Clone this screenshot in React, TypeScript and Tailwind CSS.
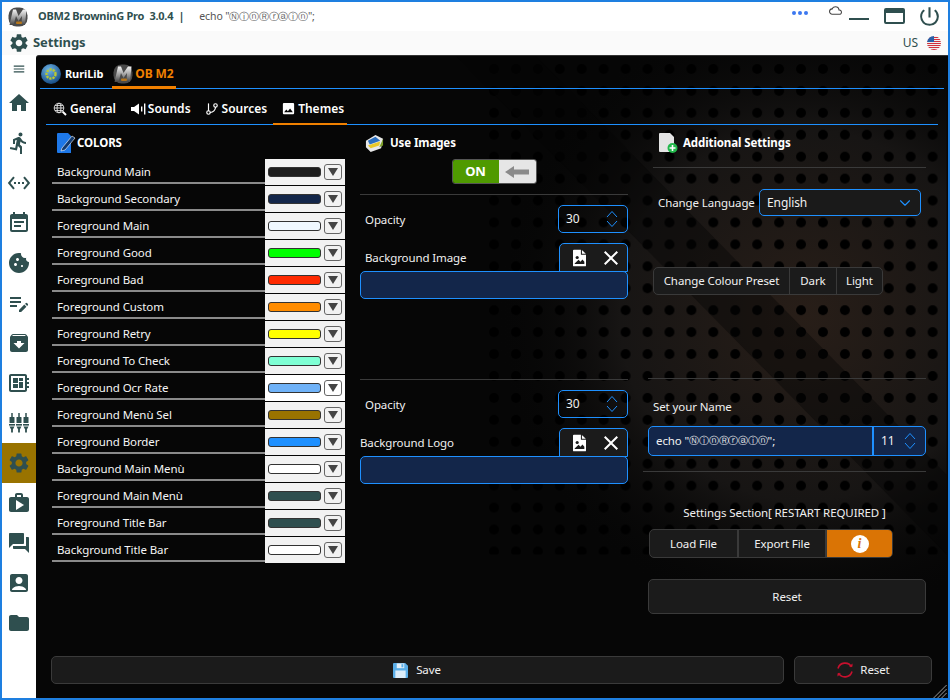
import React from 'react';
import {
  MdAccountBox, MdArchive, MdClose, MdCookie, MdDeveloperBoard, MdDirectionsRun, MdEventNote, MdEditNote,
  MdFolder, MdForum, MdHome, MdImage, MdMenu, MdPowerSettingsNew, MdSettings, MdSettingsEthernet, MdWork,
  MdCloudQueue,
} from 'react-icons/md';
import { LuGitBranch, LuChevronDown } from 'react-icons/lu';

const colors: { label: string; color: string; light?: boolean }[] = [
  { label: 'Background Main', color: '#1e1e1e' },
  { label: 'Background Secondary', color: '#13264a' },
  { label: 'Foreground Main', color: '#f0f8ff' },
  { label: 'Foreground Good', color: '#00ff00' },
  { label: 'Foreground Bad', color: '#ff2a00' },
  { label: 'Foreground Custom', color: '#ff8c00' },
  { label: 'Foreground Retry', color: '#ffff00' },
  { label: 'Foreground To Check', color: '#7fffd4' },
  { label: 'Foreground Ocr Rate', color: '#6fb2f8', light: true },
  { label: 'Foreground Menù Sel', color: '#997300' },
  { label: 'Foreground Border', color: '#1e90ff' },
  { label: 'Background Main Menù', color: '#ffffff' },
  { label: 'Foreground Main Menù', color: '#2f4f4f' },
  { label: 'Foreground Title Bar', color: '#2f4f4f' },
  { label: 'Background Title Bar', color: '#ffffff' },
];

const Logo = ({ id }: { id: string }) => (
  <svg viewBox="0 0 20 20" className="w-5 h-5 shrink-0">
    <defs>
      <linearGradient id={id} x1="0" y1="0" x2="0" y2="1">
        <stop offset="0" stopColor="#f4f4f4" />
        <stop offset="0.55" stopColor="#9a9a9a" />
        <stop offset="1" stopColor="#444" />
      </linearGradient>
    </defs>
    <rect x="0.5" y="0.5" width="19" height="19" rx="8" fill="#4a4a4a" />
    <path d="M1.5 18 L5 2.5 H8 L10.5 9 L15 2.5 H18.5 L17 18 H13.5 L14 9 L10.5 14 L8 9 L5.5 18 Z" fill={`url(#${id})`} />
    <rect x="8" y="14.5" width="6" height="2.5" rx="1" fill="#b5761c" />
  </svg>
);

const RuriIcon = () => (
  <svg viewBox="0 0 20 20" className="w-5 h-5 shrink-0">
    <defs>
      <radialGradient id="ruri" cx="0.4" cy="0.3" r="0.8">
        <stop offset="0" stopColor="#6fb6e8" />
        <stop offset="1" stopColor="#0c3f78" />
      </radialGradient>
    </defs>
    <circle cx="10" cy="10" r="10" fill="url(#ruri)" />
    <circle cx="10" cy="10" r="4.5" fill="none" stroke="#b9c832" strokeWidth="2.4" strokeDasharray="2.2 1" />
  </svg>
);

const Faders = () => (
  <svg viewBox="0 0 20 20" className="w-5 h-5" fill="#2f4f4f">
    {[3, 10, 17].map((x) => (
      <g key={x}>
        <rect x={x - 0.75} y="0" width="1.5" height="4" />
        <rect x={x - 2.5} y="4" width="5" height="6" rx="0.6" />
        <rect x={x - 3} y="11" width="6" height="1.6" />
        <path d={`M${x - 2.5} 13.5 h5 l-1.6 3 v3 h-1.8 v-3 z`} />
      </g>
    ))}
  </svg>
);

const WorkPlay = () => (
  <span className="relative flex items-center justify-center w-6 h-6">
    <MdWork size={24} color="#2f4f4f" />
    <svg viewBox="0 0 10 10" className="absolute w-[10px] h-[10px] top-[9px] left-[8px]">
      <path d="M1 0 L9 5 L1 10 Z" fill="#fff" />
    </svg>
  </span>
);

const GlobeSearch = () => (
  <svg viewBox="0 0 14 14" className="w-[14px] h-[14px] ml-[7px]" fill="none" stroke="#e8e8e8" strokeWidth="0.9">
    <circle cx="6" cy="6" r="4.8" />
    <ellipse cx="6" cy="6" rx="2" ry="4.8" />
    <path d="M1.2 6 H10.8 M2 3.4 H10 M2 8.6 H10" />
    <path d="M9.6 9.6 L13 13" strokeWidth="2" stroke="#fff" />
  </svg>
);

const Speaker = () => (
  <svg viewBox="0 0 16 12" className="w-[16px] h-3 ml-[15px]" fill="#fff">
    <path d="M0 4 H3 L8 0.5 V11.5 L3 8 H0 Z" />
    <rect x="10" y="3.5" width="1.4" height="5" />
    <rect x="13" y="0.5" width="1.4" height="11" />
  </svg>
);

const FileImage = () => (
  <svg viewBox="0 0 14 18" className="w-[13px] h-[18px]">
    <path d="M0 1 Q0 0 1 0 H8.5 V5.5 H14 V17 Q14 18 13 18 H1 Q0 18 0 17 Z" fill="#fff" />
    <path d="M9.6 0.3 L13.8 4.5 H9.6 Z" fill="#fff" />
    <circle cx="4.5" cy="8.5" r="1.7" fill="#1b1b1b" />
    <path d="M1.8 15 L6 11 L8 13 L10.2 10.5 L12.2 13 V15.5 H1.8 Z" fill="#1b1b1b" />
  </svg>
);

const Spin = ({ className = '' }: { className?: string }) => (
  <svg viewBox="0 0 12 20" className={`w-3 h-5 ${className}`} fill="none" stroke="#1e90ff" strokeWidth="1">
    <path d="M1 8 L6 2.5 L11 8" />
    <path d="M1 12 L6 17.5 L11 12" />
  </svg>
);

const Spinner = () => (
  <div className="w-[70px] h-[28px] rounded-[5px] border border-[#1e90ff] flex items-center justify-between pl-[7px] pr-[9px] text-[12px] text-[#f0f0f0]">
    30
    <Spin />
  </div>
);

const Divider = ({ className = '' }: { className?: string }) => <div className={`h-px bg-[#3a3a3a] ${className}`} />;

const Circled = () => <span className="text-[9.5px] font-['DejaVu_Sans',sans-serif] tracking-[-0.2px]">ⓃⓘⓝⓇⓡⓐⓘⓝ</span>;

const PickerRow = ({ label, inset }: { label: string; inset: boolean }) => (
  <>
    <div className="flex justify-between items-end mt-[10px]">
      <span className={`text-[#f0f0f0] pb-[5px] ${inset ? 'pl-[5px]' : ''}`}>{label}</span>
      <div className="w-[69px] h-[29px] -mb-px rounded-t-[5px] border border-[#1e90ff] bg-[#1b1b1b] flex items-center justify-between pl-[13px] pr-[4px]">
        <FileImage />
        <MdClose size={24} color="#fff" />
      </div>
    </div>
    <div className="relative h-[28px] rounded-[5px] border border-[#1e90ff] bg-[#13264a]" />
  </>
);

const App = () => {
  const navTop = [
    <MdHome size={24} color="#2f4f4f" />,
    <MdDirectionsRun size={24} color="#2f4f4f" />,
    <MdSettingsEthernet size={24} color="#2f4f4f" />,
    <MdEventNote size={24} color="#2f4f4f" />,
    <MdCookie size={24} color="#2f4f4f" />,
    <MdEditNote size={24} color="#2f4f4f" />,
    <MdArchive size={24} color="#2f4f4f" />,
    <MdDeveloperBoard size={24} color="#2f4f4f" />,
    <Faders />,
    <MdSettings size={24} color="#2f4f4f" />,
    <WorkPlay />,
    <MdForum size={24} color="#2f4f4f" />,
    <MdAccountBox size={24} color="#2f4f4f" />,
    <MdFolder size={24} color="#2f4f4f" />,
  ];

  return (
    <div className="w-[950px] h-[700px] flex flex-col overflow-hidden bg-white border-2 border-[#1e7fe0] text-[11.5px] tracking-[-0.1px] font-['Noto_Sans',sans-serif]">
      {/* title bar */}
      <div className="h-[29px] shrink-0 flex items-center bg-white text-[#2f4f4f] pl-[6px]">
        <Logo id="m1" />
        <span className="ml-[10px] text-[11px] tracking-[-0.25px] font-bold whitespace-pre">OBM2 BrowninG Pro  3.0.4  |</span>
        <span className="ml-[15px] text-[10.5px] text-[#555]">echo "<Circled />";</span>
        <div className="ml-auto flex items-center">
          <div className="flex gap-[2px] mb-[8px]">
            <span className="w-[4px] h-[4px] rounded-full bg-[#3b78f0]" />
            <span className="w-[4px] h-[4px] rounded-full bg-[#3b78f0]" />
            <span className="w-[4px] h-[4px] rounded-full bg-[#3b78f0]" />
          </div>
          <MdCloudQueue size={13} className="ml-[21px] mb-[12px]" color="#444" />
          <span className="ml-[7px] mt-[5px] w-[20px] h-[2px] bg-[#2f4f4f]" />
          <div className="ml-[15px] mb-[2px] w-[21px] h-[16px] rounded-[2px] border-2 border-[#2f4f4f] border-t-[5px]" />
          <MdPowerSettingsNew size={25} className="ml-[12px] mr-[6px]" color="#2f4f4f" />
        </div>
      </div>

      {/* settings bar */}
      <div className="h-[24px] shrink-0 flex items-center bg-[#fafafa] text-[#2f4f4f] pl-[6px]">
        <MdSettings size={22} color="#2f4f4f" />
        <span className="ml-[3px] text-[13px] font-bold">Settings</span>
        <span className="ml-auto text-xs">US</span>
        <svg viewBox="0 0 14 14" className="w-[14px] h-[14px] ml-[9px] mr-[7px]">
          <defs>
            <clipPath id="flag">
              <circle cx="7" cy="7" r="7" />
            </clipPath>
          </defs>
          <g clipPath="url(#flag)">
            <rect width="14" height="14" fill="#eee" />
            {[1, 3, 5, 7, 9, 11, 13].map((y) => (
              <rect key={y} y={y} width="14" height="1" fill="#d22f3c" />
            ))}
            <rect width="7" height="6" fill="#2a5fa8" />
          </g>
        </svg>
      </div>

      <div className="flex-1 flex min-h-0">
        {/* side menu */}
        <div className="w-[34px] shrink-0 bg-white flex flex-col items-center">
          <div className="h-[28px] flex items-center justify-center">
            <MdMenu size={14} color="#2f4f4f" />
          </div>
          {navTop.map((icon, i) => (
            <div key={i} className={`w-full h-10 flex items-center justify-center ${i === 9 ? 'bg-[#997300]' : ''}`}>
              {icon}
            </div>
          ))}
        </div>

        {/* main panel */}
        <div className="relative flex-1 flex flex-col bg-[#060606] rounded-tl-[3px] border-t border-[#333] text-[#f0f0f0] min-w-0">
          <svg className="absolute inset-0 w-full h-full pointer-events-none" viewBox="0 0 912 644">
            <defs>
              <pattern id="dots" x="7" y="2" width="22" height="22" patternUnits="userSpaceOnUse">
                <circle cx="11" cy="11" r="5" fill="#000" />
              </pattern>
              <radialGradient id="glow" gradientUnits="userSpaceOnUse" cx="770" cy="260" r="310">
                <stop offset="0" stopColor="#281e18" />
                <stop offset="0.6" stopColor="#171514" />
                <stop offset="1" stopColor="#060606" stopOpacity="0" />
              </radialGradient>
            </defs>
            <rect width="912" height="644" fill="url(#glow)" />
            <rect x="450" y="0" width="462" height="500" fill="url(#dots)" />
            <path d="M420 0 H500 L912 420 V500 Z" fill="#040404" opacity="0.4" />
            <path d="M903 644 L912 635 M907 644 L912 639 M899 644 L912 631" stroke="#9a9a9a" strokeWidth="1" />
          </svg>

          <div className="relative flex flex-col flex-1 min-h-0">
            {/* app tabs */}
            <div className="mx-1 h-[33px] pt-[4px] border-b border-[#1e90ff] flex items-center pl-px">
              <RuriIcon />
              <span className="ml-[4px] text-[11px] font-bold text-white">RuriLib</span>
              <div className="ml-[9px] h-[29px] -mb-px flex items-center border-b-[3px] border-[#f08000] pr-[2px] pl-px pt-[2px]">
                <Logo id="m2" />
                <span className="ml-[2px] text-xs font-bold text-[#f08000]">OB M2</span>
              </div>
            </div>

            {/* section tabs */}
            <div className="mx-[10px] h-[36px] pt-[4px] border-b border-[#1e90ff] flex items-center text-xs tracking-normal font-semibold text-white">
              <GlobeSearch />
              <span className="ml-[3px]">General</span>
              <Speaker />
              <span className="ml-[1px]">Sounds</span>
              <LuGitBranch size={14} className="ml-[14px]" />
              <span className="ml-[3px]">Sources</span>
              <div className="ml-[6px] w-[74px] h-[32px] -mb-px flex items-center border-b-2 border-[#f08000] pl-[8px] pt-px">
                <MdImage size={15} />
                <span className="ml-[2px]">Themes</span>
              </div>
            </div>

            <div className="flex flex-1 min-h-0">
              {/* colors */}
              <div className="ml-[16px] w-[293px] shrink-0">
                <div className="h-[34px] flex items-center pl-[5px] pt-[2px]">
                  <svg viewBox="0 0 20 20" className="w-5 h-5">
                    <path d="M0 1 Q0 0 1 0 H11 L14 3 V20 H1 Q0 20 0 19 Z" fill="#1e78e8" />
                    <path d="M5 15 L15 3 L18 5 L8 17 L4 18 Z" fill="#123a6e" stroke="#fff" strokeWidth="0.6" />
                  </svg>
                  <span className="text-[11.5px] font-bold text-white">COLORS</span>
                </div>
                {colors.map((c) => (
                  <div key={c.label} className="flex h-[27px]">
                    <div className="flex-1 h-[25px] border-b-2 border-[#8a8a8a] pl-[5px] pt-[2px] flex items-center text-[#f5f5f5]">
                      {c.label}
                    </div>
                    <div className={`w-[80px] h-[26px] flex items-center pl-[3px] ${c.light ? 'bg-white' : 'bg-[#f2f2f2]'}`}>
                      <span className="w-[53px] h-[10px] rounded-[3px] border border-[#333]" style={{ backgroundColor: c.color }} />
                      <span className="ml-[3px] w-[18px] h-[16px] rounded-[3px] border border-[#666] flex items-center justify-center">
                        <svg viewBox="0 0 10 8" className="w-[10px] h-2">
                          <path d="M0 0 H10 L5 8 Z" fill="#444" />
                        </svg>
                      </span>
                    </div>
                  </div>
                ))}
              </div>

              {/* images */}
              <div className="ml-[15px] w-[268px] shrink-0 flex flex-col">
                <div className="h-[34px] flex items-center pl-[5px] pt-[2px]">
                  <svg viewBox="0 0 20 20" className="w-[19px] h-[19px]">
                    <path d="M1 7 L11 1 L19 5 L17 15 L6 19 L1 14 Z" fill="#e8e8e8" />
                    <path d="M3 7 L11 3 L16 7 L5 11 Z" fill="#2a6fc0" />
                    <path d="M3 12 L16 8 L15 12 L6 15 Z" fill="#e8c828" />
                    <path d="M15 14 L19 5 L19 12 Z" fill="#7da02a" />
                  </svg>
                  <span className="ml-[6px] font-bold text-white">Use Images</span>
                </div>
                <div className="self-center w-[85px] h-[25px] rounded-[3px] border border-[#555] flex overflow-hidden">
                  <span className="w-[46px] flex items-center justify-center bg-[#4f9a00] text-[13px] font-bold text-white">ON</span>
                  <span className="flex-1 flex items-center justify-center bg-[#e6e6e6]">
                    <svg viewBox="0 0 24 12" className="w-6 h-3">
                      <path d="M0 6 L9 0 V3.5 H24 V8.5 H9 V12 Z" fill="#8a8a8a" />
                    </svg>
                  </span>
                </div>
                <Divider className="mt-[10px]" />
                <div className="flex justify-between items-center mt-[10px] pl-[5px]">
                  <span className="pt-[1px]">Opacity</span>
                  <Spinner />
                </div>
                <PickerRow label="Background Image" inset />
                <Divider className="mt-[80px]" />
                <div className="flex justify-between items-center mt-[10px] pl-[5px]">
                  <span className="pt-[2px]">Opacity</span>
                  <Spinner />
                </div>
                <PickerRow label="Background Logo" inset={false} />
              </div>

              {/* additional settings */}
              <div className="ml-[20px] w-[278px] shrink-0 flex flex-col">
                <div className="ml-[5px] h-[43px] pb-[6px] border-b border-[#3a3a3a] flex items-center pl-[5px]">
                  <svg viewBox="0 0 20 20" className="w-5 h-5">
                    <path d="M1 1 Q1 0 2 0 H12 L16 4 V19 H2 Q1 19 1 18 Z" fill="#e4e4e4" />
                    <circle cx="14.5" cy="15" r="5" fill="#22b84c" />
                    <path d="M14.5 12 V18 M11.5 15 H17.5" stroke="#fff" strokeWidth="1.6" />
                  </svg>
                  <span className="ml-[5px] font-bold text-white">Additional Settings</span>
                </div>
                <div className="mt-[21px] ml-[10px] flex items-center">
                  <span className="whitespace-nowrap">Change Language</span>
                  <div className="ml-auto mr-[5px] w-[162px] h-[27px] rounded-[5px] border border-[#1e90ff] bg-[#1a1a1a] flex items-center justify-between pl-[7px] pr-[6px] text-xs">
                    English
                    <LuChevronDown size={18} color="#1e90ff" strokeWidth={1.5} />
                  </div>
                </div>
                <div className="mt-[51px] ml-[5px] w-[230px] h-[28px] flex rounded-[5px] border border-[#3a3a3a] bg-[#1b1b1b]">
                  <span className="w-[136px] flex items-center justify-center border-r border-[#3a3a3a]">Change Colour Preset</span>
                  <span className="w-[47px] flex items-center justify-center border-r border-[#3a3a3a]">Dark</span>
                  <span className="flex-1 flex items-center justify-center">Light</span>
                </div>
                <Divider className="mt-[83px]" />
                <span className="mt-[20px] ml-[5px] leading-[16px]">Set your Name</span>
                <div className="mt-[11px] h-[30px] rounded-[5px] border border-[#1e90ff] bg-[#13264a] flex items-center">
                  <span className="w-[225px] pl-[7px] border-r-2 border-[#1e90ff] h-full flex items-center gap-0 whitespace-pre">
                    echo "<Circled />";
                  </span>
                  <span className="flex-1 flex items-center justify-between pl-[7px] pr-[9px] text-xs">
                    11
                    <Spin />
                  </span>
                </div>
                <Divider className="mt-[15px] -ml-[5px]" />
                <span className="mt-[33px] mr-[5px] text-center leading-[16px] whitespace-nowrap">Settings Section[ RESTART REQUIRED ]</span>
                <div className="mt-[8px] ml-px w-[244px] h-[29px] flex rounded-[5px] border border-[#3a3a3a] bg-[#1b1b1b] overflow-hidden">
                  <span className="w-[89px] flex items-center justify-center border-r-2 border-[#3a3a3a]">Load File</span>
                  <span className="w-[88px] flex items-center justify-center border-r-2 border-[#3a3a3a]">Export File</span>
                  <span className="flex-1 flex items-center justify-center bg-[#da7405]">
                    <span className="w-[18px] h-[18px] rounded-full bg-white flex items-center justify-center text-[#da7405] text-[14px] font-bold italic font-['Liberation_Serif',serif]">i</span>
                  </span>
                </div>
                <div className="mt-[21px] h-[35px] rounded-[5px] border border-[#3a3a3a] bg-[#1b1b1b] flex items-center justify-center">Reset</div>
              </div>
            </div>

            {/* bottom actions */}
            <div className="flex ml-[15px] mb-[14px] h-[28px]">
              <div className="w-[733px] rounded-[5px] border border-[#3a3a3a] bg-[#1b1b1b] flex items-center justify-center">
                <svg viewBox="0 0 16 16" className="w-[15px] h-[15px] -ml-[1px]">
                  <path d="M0 1 Q0 0 1 0 H13 L16 3 V15 Q16 16 15 16 H1 Q0 16 0 15 Z" fill="#5aaee8" />
                  <rect x="4" y="0.5" width="8" height="5" fill="#e4f0f8" />
                  <rect x="9" y="1.2" width="2" height="3.4" fill="#5aaee8" />
                  <rect x="2.5" y="8" width="11" height="8" fill="#dcecf8" />
                </svg>
                <span className="ml-[8px]">Save</span>
              </div>
              <div className="ml-[10px] w-[138px] rounded-[5px] border border-[#3a3a3a] bg-[#1b1b1b] flex items-center justify-center">
                <svg viewBox="0 0 18 18" className="w-[18px] h-[18px]" fill="none" stroke="#c8102e" strokeWidth="1.6">
                  <path d="M2 7.5 A7.3 7.3 0 0 1 15.5 6" />
                  <path d="M16 10.5 A7.3 7.3 0 0 1 2.5 12" />
                  <path d="M13 5.5 H16.5 V2.5" fill="#c8102e" stroke="none" />
                  <path d="M5 12.5 H1.5 V15.5" fill="#c8102e" stroke="none" />
                </svg>
                <span className="ml-[6px]">Reset</span>
              </div>
            </div>
          </div>
        </div>
      </div>
    </div>
  );
};

export default App;
